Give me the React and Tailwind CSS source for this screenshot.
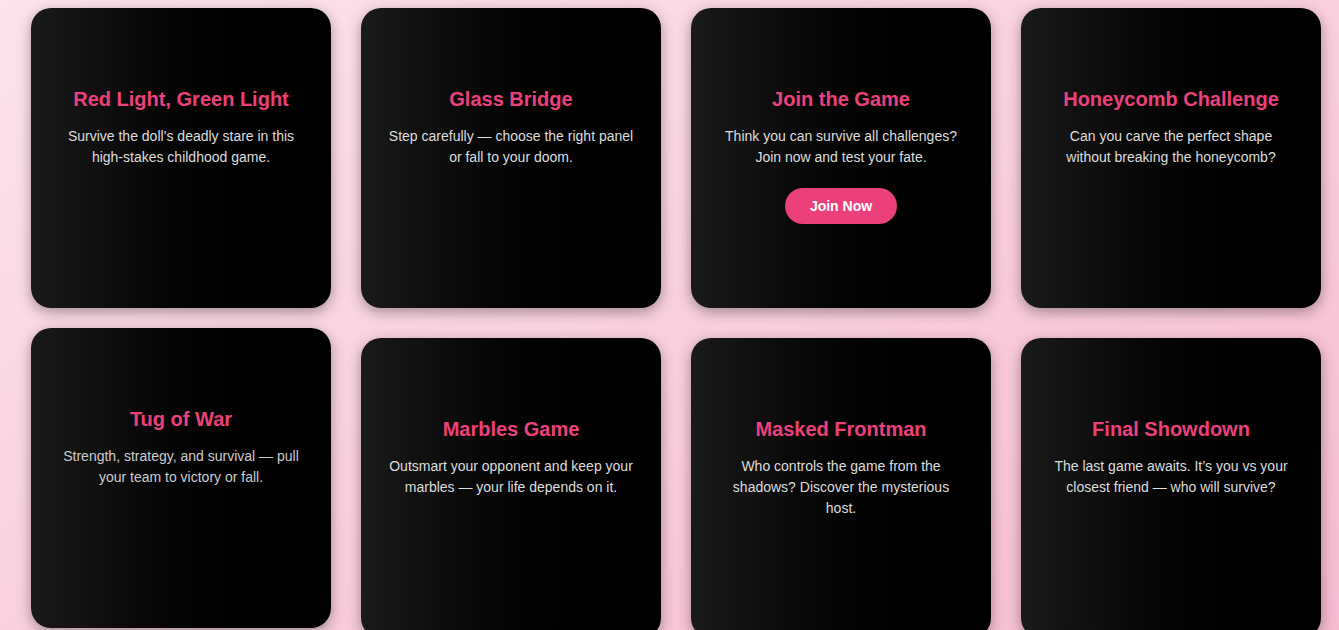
import React from "react";

const cards = [
  { t: "Red Light, Green Light", d: "Survive the doll’s deadly stare in this high-stakes childhood game." },
  { t: "Glass Bridge", d: "Step carefully — choose the right panel or fall to your doom." },
  { t: "Join the Game", d: "Think you can survive all challenges? Join now and test your fate.", btn: true },
  { t: "Honeycomb Challenge", d: "Can you carve the perfect shape without breaking the honeycomb?" },
  { t: "Tug of War", d: "Strength, strategy, and survival — pull your team to victory or fall.", hover: true },
  { t: "Marbles Game", d: "Outsmart your opponent and keep your marbles — your life depends on it." },
  { t: "Masked Frontman", d: "Who controls the game from the shadows? Discover the mysterious host." },
  { t: "Final Showdown", d: "The last game awaits. It’s you vs your closest friend — who will survive?" },
];

export default function App() {
  return (
    <div
      className="min-h-[630px] w-full bg-gradient-to-br from-[#fce4ec] to-[#f6bad0] pl-[31px] pt-[8px] pb-10"
      style={{ fontFamily: '"Liberation Sans", Arial, sans-serif' }}
    >
      <div className="grid grid-cols-[repeat(4,300px)] gap-x-[30px] gap-y-[30px]">
        {cards.map((c, i) => (
          <div
            key={i}
            className={
              "h-[300px] w-[300px] rounded-[20px] bg-gradient-to-r from-[#1a1a1a] to-[#000000] px-[27px] pt-[80px] text-center shadow-[0_4px_14px_rgba(0,0,0,0.35)] " +
              (c.hover ? "-translate-y-[10px]" : "")
            }
          >
            <h3 className="mb-[15px] text-[20px] font-bold leading-[23px] text-[#ec407a]">{c.t}</h3>
            <p className={"text-[14px] leading-[21px] " + (c.hover ? "text-[#cccccc]" : "text-[#dddddd]")}>{c.d}</p>
            {c.btn && (
              <button className="mt-[20px] h-[36px] rounded-full bg-[#ec407a] px-[25px] text-[14px] font-bold text-white">
                Join Now
              </button>
            )}
          </div>
        ))}
      </div>
    </div>
  );
}
